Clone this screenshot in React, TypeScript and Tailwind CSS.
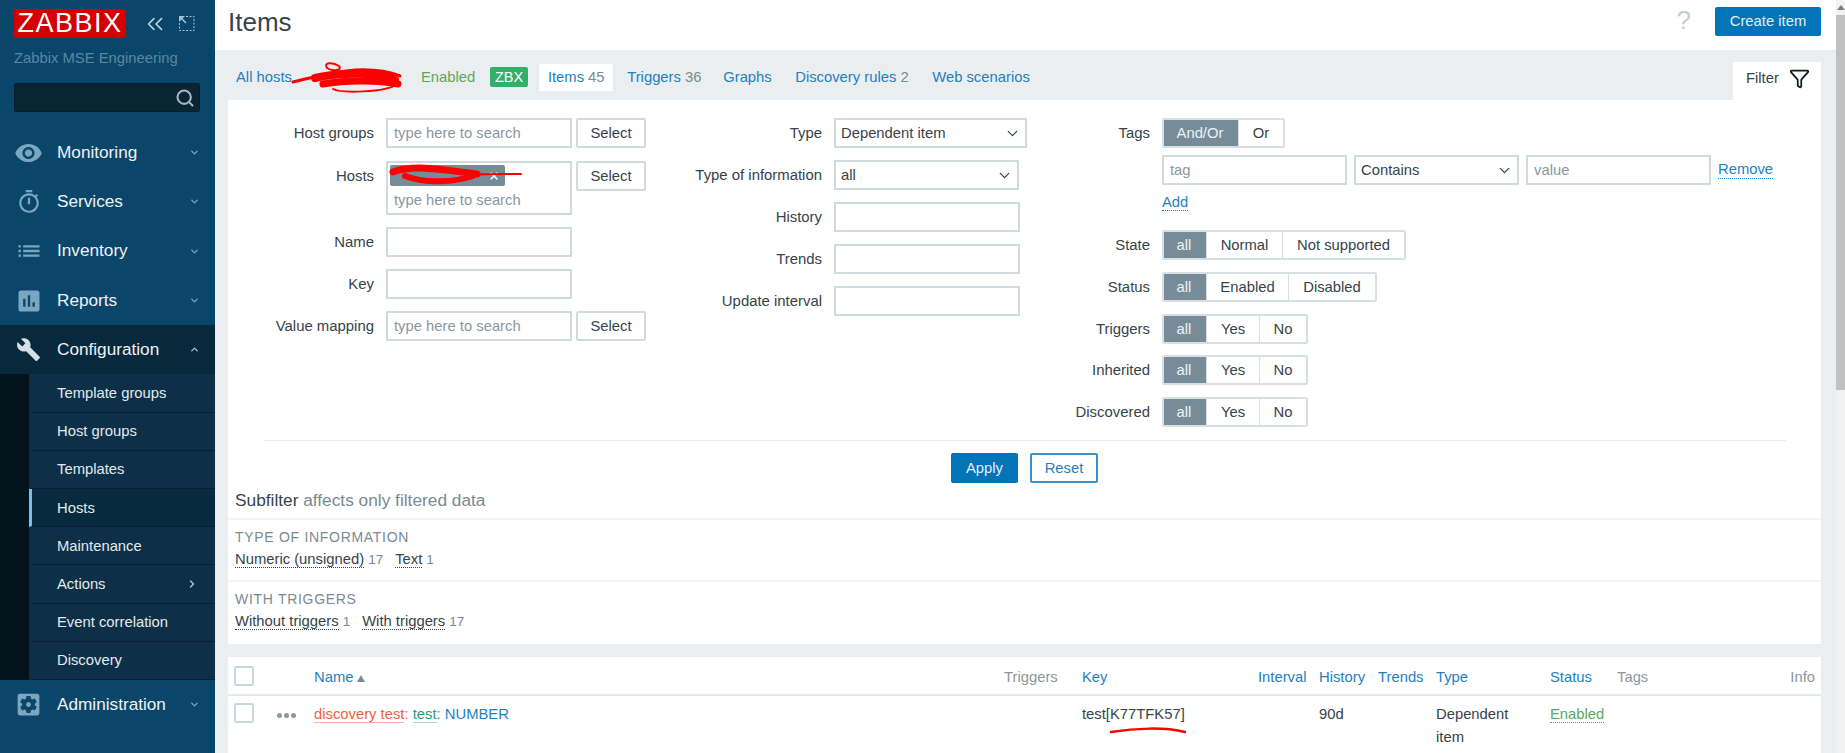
import { ChevronDown, ChevronRight, ChevronUp, ChevronsLeft, Funnel, Search, X } from "lucide-react"
import { MdAssessment, MdBuild, MdList, MdOutlineTimer, MdSettingsApplications, MdVisibility } from "react-icons/md"
import type { ReactNode } from "react"

// ***** SIDEBAR *****

function MenuItem({ icon, label, open }: { icon: ReactNode; label: string; open?: boolean }) {
    return (
        <div className={`flex h-[49.3px] items-center pl-[14px] pr-[15px] ${open ? "bg-[#08293c]" : ""}`}>
            <div className="flex w-[29px] justify-center text-[#7ba6c0]">{icon}</div>
            <span className="ml-[14px] flex-1 text-[17.2px] text-[#eef2f5]">{label}</span>
            {open ? <ChevronUp size={11} strokeWidth={3} className="text-[#a9c0cd]" /> : <ChevronDown size={11} strokeWidth={3} className="text-[#7ba6c0]" />}
        </div>
    )
}

function SubItem({ label, active, arrow }: { label: string; active?: boolean; arrow?: boolean }) {
    return (
        <div className={`flex h-[38.2px] items-center border-b border-[#071f2e] border-l-[3px] pl-[25px] pr-[17px] text-[14.8px] text-[#e4e9ec] ${active ? "border-l-[#76c0ef] bg-[#082a3e]" : "border-l-transparent"}`}>
            <span className="flex-1">{label}</span>
            {arrow && <ChevronRight size={12} strokeWidth={3} className="text-[#a9c0cd]" />}
        </div>
    )
}

function Sidebar() {
    return (
        <aside className="flex h-[753px] w-[215px] shrink-0 flex-col bg-[#0a466a]">
            <div className="flex items-center pl-[14px] pt-[9px]">
                <div className="flex h-[29px] w-[112px] items-center justify-center bg-[#d40000] text-[27px] leading-none tracking-[1.5px] text-white">ZABBIX</div>
                <ChevronsLeft size={26} strokeWidth={1.5} className="ml-[16px] text-[#c0d2dd]" />
                <svg width="17" height="17" viewBox="0 0 17 17" className="ml-[10px] text-[#a9c0cd]" fill="none" stroke="currentColor">
                    <path d="M8 1.5h8v14H1.5V8" strokeDasharray="2 1.5" />
                    <path d="M1 1h6L1 7z" fill="currentColor" stroke="none" />
                    <path d="M3 3l5 5" strokeWidth="1.5" />
                </svg>
            </div>
            <p className="ml-[14px] mt-[10px] text-[14.8px] leading-[20px] text-[#5d86a0]">Zabbix MSE Engineering</p>
            <div className="ml-[14px] mt-[15px] flex h-[29px] w-[186px] items-center justify-end rounded-[2px] border border-[#04202f] bg-[#0a2433] pr-[4px]">
                <Search size={20} strokeWidth={2.5} className="text-[#a3b6c2]" />
            </div>
            <nav className="mt-[16px]">
                <MenuItem icon={<MdVisibility size={30} />} label="Monitoring" />
                <MenuItem icon={<MdOutlineTimer size={26} />} label="Services" />
                <MenuItem icon={<MdList size={28} />} label="Inventory" />
                <MenuItem icon={<MdAssessment size={28} />} label="Reports" />
                <MenuItem icon={<MdBuild size={25} className="text-[#d5e0e6]" />} label="Configuration" open />
                <div className="flex bg-[#03141c] pl-[29px]">
                    <div className="flex-1 bg-[#0d3048]">
                        <SubItem label="Template groups" />
                        <SubItem label="Host groups" />
                        <SubItem label="Templates" />
                        <SubItem label="Hosts" active />
                        <SubItem label="Maintenance" />
                        <SubItem label="Actions" arrow />
                        <SubItem label="Event correlation" />
                        <SubItem label="Discovery" />
                    </div>
                </div>
                <MenuItem icon={<MdSettingsApplications size={29} />} label="Administration" />
            </nav>
        </aside>
    )
}

// ***** FILTER CONTROLS *****

function Row({ label, width, children }: { label: string; width: string; children: ReactNode }) {
    return (
        <div className="flex items-start">
            <div className={`${width} h-[30px] shrink-0 text-right text-[14.9px] leading-[30px]`}>{label}</div>
            <div className="ml-[12px]">{children}</div>
        </div>
    )
}

function TextBox({ width, placeholder }: { width: string; placeholder?: string }) {
    return <div className={`${width} h-[30px] border-2 border-[#d3dade] px-[6px] leading-[26px] text-[#8b979e]`}>{placeholder}</div>
}

function SelectButton() {
    return <div className="h-[30px] w-[70px] rounded-[2px] border-2 border-[#d3dade] text-center leading-[26px]">Select</div>
}

function DropDown({ width, value }: { width: string; value: string }) {
    return (
        <div className={`${width} flex h-[30px] items-center justify-between border-2 border-[#d3dade] pl-[5px] pr-[4px]`}>
            <span>{value}</span>
            <ChevronDown size={17} strokeWidth={1.75} className="text-[#36434a]" />
        </div>
    )
}

function Segmented({ options }: { options: [string, string][] }) {
    return (
        <div className="flex h-[30px] overflow-hidden rounded-[2px] border-2 border-[#d9e0e3]">
            {options.map(([label, width], i) => (
                <div key={label} className={`${width} text-center leading-[26px] ${i === 0 ? "-my-[2px] -ml-[2px] bg-[#768d99] leading-[30px] text-[#eef2f4]" : "border-l border-[#d9e0e3]"}`}>
                    {label}
                </div>
            ))}
        </div>
    )
}

const yesNo: [string, string][] = [["all", "w-[44px]"], ["Yes", "w-[53px]"], ["No", "w-[47px]"]]

function Filter() {
    return (
        <section className="relative bg-white pt-[18px]">
            {/* Three filter columns */}
            <div className="flex h-[322px] text-[14.8px] text-[#36434a]">
                <div className="flex w-[434px] flex-col gap-[12px]">
                    <Row label="Host groups" width="w-[146px]">
                        <div className="flex gap-[4px]"><TextBox width="w-[186px]" placeholder="type here to search" /><SelectButton /></div>
                    </Row>
                    <div className="mt-[1px]">
                        <Row label="Hosts" width="w-[146px]">
                            <div className="flex items-start gap-[4px]">
                                <div className="h-[54px] w-[186px] border-2 border-[#d3dade] px-[2px] pt-[2px] text-[#8b979e]">
                                    <div className="flex h-[21px] w-[115px] items-center justify-end rounded-[2px] bg-[#768d99] pr-[5px] text-white"><X size={12} strokeWidth={3} /></div>
                                    <div className="mt-[3px] px-[4px]">type here to search</div>
                                </div>
                                <SelectButton />
                            </div>
                        </Row>
                    </div>
                    <Row label="Name" width="w-[146px]"><TextBox width="w-[186px]" /></Row>
                    <Row label="Key" width="w-[146px]"><TextBox width="w-[186px]" /></Row>
                    <Row label="Value mapping" width="w-[146px]">
                        <div className="flex gap-[4px]"><TextBox width="w-[186px]" placeholder="type here to search" /><SelectButton /></div>
                    </Row>
                </div>

                <div className="flex w-[365px] flex-col gap-[12px]">
                    <Row label="Type" width="w-[160px]"><DropDown width="w-[193px]" value="Dependent item" /></Row>
                    <Row label="Type of information" width="w-[160px]"><DropDown width="w-[185px]" value="all" /></Row>
                    <Row label="History" width="w-[160px]"><TextBox width="w-[186px]" /></Row>
                    <Row label="Trends" width="w-[160px]"><TextBox width="w-[186px]" /></Row>
                    <Row label="Update interval" width="w-[160px]"><TextBox width="w-[186px]" /></Row>
                </div>

                <div className="flex flex-col">
                    <Row label="Tags" width="w-[123px]"><Segmented options={[["And/Or", "w-[76px]"], ["Or", "w-[45px]"]]} /></Row>
                    <div className="ml-[135px] mt-[7px] flex items-center gap-[7px]">
                        <TextBox width="w-[185px]" placeholder="tag" />
                        <DropDown width="w-[165px]" value="Contains" />
                        <TextBox width="w-[185px]" placeholder="value" />
                        <span className="border-b border-dotted border-[#1f7fbf] leading-[17px] text-[#1f7fbf]">Remove</span>
                    </div>
                    <div className="ml-[135px] mt-[6px] h-[39px]">
                        <span className="border-b border-dotted border-[#1f7fbf] leading-[17px] text-[#1f7fbf]">Add</span>
                    </div>
                    <div className="flex flex-col gap-[11.8px]">
                        <Row label="State" width="w-[123px]"><div className="w-fit"><Segmented options={[["all", "w-[44px]"], ["Normal", "w-[76px]"], ["Not supported", "w-[122px]"]]} /></div></Row>
                        <Row label="Status" width="w-[123px]"><div className="w-fit"><Segmented options={[["all", "w-[44px]"], ["Enabled", "w-[82px]"], ["Disabled", "w-[87px]"]]} /></div></Row>
                        <Row label="Triggers" width="w-[123px]"><div className="w-fit"><Segmented options={yesNo} /></div></Row>
                        <Row label="Inherited" width="w-[123px]"><div className="w-fit"><Segmented options={yesNo} /></div></Row>
                        <Row label="Discovered" width="w-[123px]"><div className="w-fit"><Segmented options={yesNo} /></div></Row>
                    </div>
                </div>
            </div>

            <div className="mx-[35px] border-t border-[#ebeef0]" />

            <div className="mt-[12px] flex justify-center gap-[12px] text-[14.8px]">
                <div className="h-[30px] w-[67px] rounded-[2px] bg-[#0275b8] text-center leading-[30px] text-[#e4eef5]">Apply</div>
                <div className="h-[30px] w-[68px] rounded-[2px] border-2 border-[#3d90c8] text-center leading-[26px] text-[#1f7fbf]">Reset</div>
            </div>

            {/* Subfilter */}
            <div className="mt-[5px] h-[32px] border-b-2 border-[#f2f4f5] px-[7px] text-[17.3px] leading-[24px]">
                <span className="text-[#36434a]">Subfilter</span> <span className="text-[#7b8a92]">affects only filtered data</span>
            </div>
            <SubfilterGroup title="TYPE OF INFORMATION" items={[["Numeric (unsigned)", "17"], ["Text", "1"]]} />
            <SubfilterGroup title="WITH TRIGGERS" items={[["Without triggers", "1"], ["With triggers", "17"]]} last />
        </section>
    )
}

function SubfilterGroup({ title, items, last }: { title: string; items: [string, string][]; last?: boolean }) {
    return (
        <div className={`h-[62px] px-[7px] pt-[8px] ${last ? "" : "border-b-2 border-[#f2f4f5]"}`}>
            <div className="text-[14px] leading-[18px] tracking-[0.7px] text-[#7b8a92]">{title}</div>
            <div className="mt-[4px] flex gap-[12px] text-[14.8px] leading-[19px] text-[#36434a]">
                {items.map(([label, count]) => (
                    <span key={label}>
                        <span className="border-b border-dotted border-[#36434a]">{label}</span>
                        <span className="ml-[4px] text-[13.5px] text-[#7b8a92]">{count}</span>
                    </span>
                ))}
            </div>
        </div>
    )
}

// ***** ITEMS TABLE *****

function CheckBox() {
    return <div className="h-[20px] w-[20px] rounded-[2px] border-2 border-[#cdd5d9] bg-white" />
}

function ItemsTable() {
    const cols = "grid grid-cols-[86px_690px_78px_176px_61px_59px_58px_114px_67px_1fr_auto] pr-[6px]"
    return (
        <section className="mt-[13px] h-[110px] bg-white text-[14.8px]">
            <div className={`${cols} h-[39px] items-center border-b-2 border-[#e3e8ea] text-[#1f7fbf]`}>
                <div className="pl-[6px]"><CheckBox /></div>
                <div className="flex items-center gap-[4px] pt-[3px]">
                    Name
                    <div className="mt-[2px] h-0 w-0 border-x-[4px] border-b-[7px] border-x-transparent border-b-[#768d99]" />
                </div>
                <div className="pt-[3px] text-[#8b979e]">Triggers</div>
                <div className="pt-[3px]">Key</div>
                <div className="pt-[3px]">Interval</div>
                <div className="pt-[3px]">History</div>
                <div className="pt-[3px]">Trends</div>
                <div className="pt-[3px]">Type</div>
                <div className="pt-[3px]">Status</div>
                <div className="pt-[3px] text-[#8b979e]">Tags</div>
                <div className="pt-[3px] text-[#8b979e]">Info</div>
            </div>
            <div className={`${cols} pt-[7px] leading-[22px] text-[#36434a]`}>
                <div className="flex items-start pl-[6px]">
                    <CheckBox />
                    <div className="ml-[23px] mt-[10px] flex gap-[2px]">
                        <div className="h-[5px] w-[5px] rounded-full bg-[#8b979e]" />
                        <div className="h-[5px] w-[5px] rounded-full bg-[#8b979e]" />
                        <div className="h-[5px] w-[5px] rounded-full bg-[#8b979e]" />
                    </div>
                </div>
                <div className="text-[#1f7fbf]">
                    <span className="border-b border-[#ffb0a0] text-[#f4603f]">discovery test</span>
                    <span className="text-[#f4603f]">: </span>
                    <span className="border-b border-[#a0d6c4] text-[#2f9e78]">test</span>
                    <span className="text-[#2f9e78]">: </span>
                    NUMBER
                </div>
                <div />
                <div>test[K77TFK57]</div>
                <div />
                <div>90d</div>
                <div />
                <div className="leading-[23px]">Dependent<br />item</div>
                <div><span className="border-b border-dotted border-[#5aa85e] text-[#5aa85e]">Enabled</span></div>
                <div />
                <div />
            </div>
        </section>
    )
}

// ***** PAGE *****

export default function App() {
    return (
        <div className="flex h-[753px] overflow-hidden bg-[#ebeef0] font-['Liberation_Sans',Arial,sans-serif] text-[#36434a]">
            <Sidebar />

            <main className="relative min-w-0 flex-1">
                <header className="flex h-[50px] items-start bg-white pl-[13px] pr-[15px] pt-[7px]">
                    <h1 className="mt-[1px] flex-1 text-[26px] leading-[29px]">Items</h1>
                    <span className="mr-[24px] text-[26px] leading-[26px] text-[#c5ccd0]">?</span>
                    <div className="h-[29px] w-[106px] rounded-[2px] bg-[#0275b8] text-center text-[14.8px] leading-[29px] text-[#e4eef5]">Create item</div>
                </header>

                <div className="pl-[13px] pr-[15px]">
                    {/* Host navigation */}
                    <div className="flex h-[50px] items-center pl-[8px] pt-[4px] text-[14.8px] text-[#1f7fbf]">
                        <span className="w-[185px]">All hosts</span>
                        <span className="w-[69px] text-[#5aa85e]">Enabled</span>
                        <span className="rounded-[2px] bg-[#34af67] px-[5px] text-[14.5px] leading-[20px] text-white">ZBX</span>
                        <span className="ml-[11px] flex h-[27px] w-[74px] items-center justify-center bg-white">Items <span className="ml-[4px] text-[#7b8a92]">45</span></span>
                        <span className="ml-[14px] w-[96px]">Triggers <span className="text-[#7b8a92]">36</span></span>
                        <span className="w-[72px]">Graphs</span>
                        <span className="w-[137px]">Discovery rules <span className="text-[#7b8a92]">2</span></span>
                        <span>Web scenarios</span>
                        <div className="ml-auto flex h-[38px] w-[88px] items-center self-end bg-white pb-[6px] pl-[13px] text-[#36434a]">
                            Filter
                            <Funnel size={21} strokeWidth={2} className="ml-[10px] text-[#11181c]" />
                        </div>
                    </div>

                    <Filter />
                    <ItemsTable />
                </div>

                {/* Red scribbles on the screenshot */}
                <svg className="pointer-events-none absolute left-0 top-0" width="1620" height="753" fill="none" stroke="#ff0000" strokeLinecap="round">
                    <path d="M78 82 C95 78 115 72 140 70 C160 69 175 72 185 76" strokeWidth="3" />
                    <path d="M112 68 C108 62 118 62 124 66 C128 70 118 72 112 68" strokeWidth="2" />
                    <path d="M100 78 C125 72 165 72 180 80" strokeWidth="8" />
                    <path d="M108 84 C130 80 165 80 183 84" strokeWidth="7" />
                    <path d="M118 89 C125 93 170 93 183 84" strokeWidth="2" />
                    <path d="M178 172 C200 164 230 170 262 174" strokeWidth="7" />
                    <path d="M190 176 C210 184 240 182 258 176" strokeWidth="6" />
                    <path d="M255 175 C270 174 290 174 306 174" strokeWidth="2" />
                    <path d="M896 732 C920 728 950 727 970 732" strokeWidth="2.5" />
                </svg>
            </main>

            {/* Scrollbar */}
            <div className="relative w-[9px] shrink-0 bg-[#f1f1f1] pt-[15px]">
                <div className="absolute left-[1px] top-[5px] h-0 w-0 border-x-[4px] border-b-[5px] border-x-transparent border-b-[#7f7f7f]" />
                <div className="h-[375px] bg-[#c1c1c1]" />
            </div>
        </div>
    )
}
